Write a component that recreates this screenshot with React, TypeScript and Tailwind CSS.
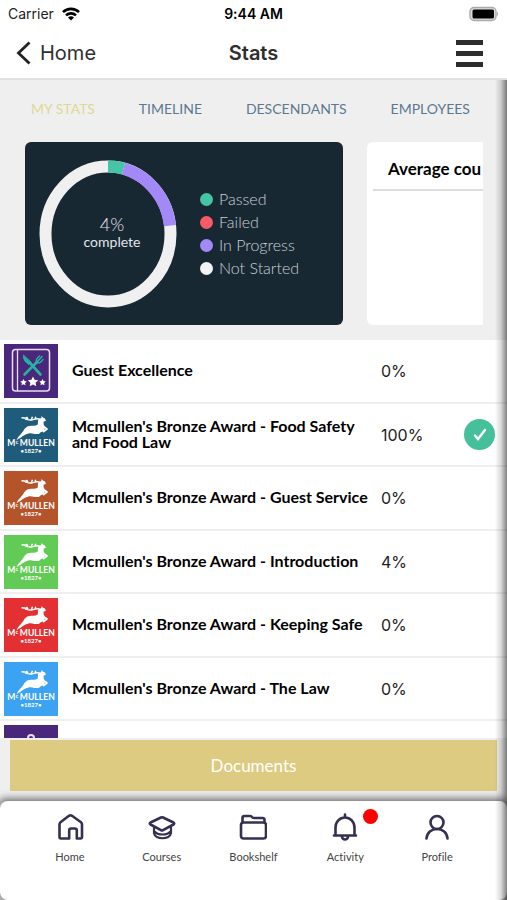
import type { ReactNode } from "react";

type Course = {
  title: string;
  percent: string;
  tile: string;
  kind: "guest" | "stag";
  done?: boolean;
};

const tabs = ["MY STATS", "TIMELINE", "DESCENDANTS", "EMPLOYEES"];

const legend = [
  { label: "Passed", color: "bg-[#45c4a6]" },
  { label: "Failed", color: "bg-[#f85a67]" },
  { label: "In Progress", color: "bg-[#a388f8]" },
  { label: "Not Started", color: "bg-[#f2f4f6]" },
];

const courses: Course[] = [
  { title: "Guest Excellence", percent: "0%", tile: "bg-[#49277a]", kind: "guest" },
  {
    title: "Mcmullen's Bronze Award - Food Safety and Food Law",
    percent: "100%",
    tile: "bg-[#1f5c7c]",
    kind: "stag",
    done: true,
  },
  { title: "Mcmullen's Bronze Award - Guest Service", percent: "0%", tile: "bg-[#b5532a]", kind: "stag" },
  { title: "Mcmullen's Bronze Award - Introduction", percent: "4%", tile: "bg-[#62cb55]", kind: "stag" },
  { title: "Mcmullen's Bronze Award - Keeping Safe", percent: "0%", tile: "bg-[#e33032]", kind: "stag" },
  { title: "Mcmullen's Bronze Award - The Law", percent: "0%", tile: "bg-[#3ca2f2]", kind: "stag" },
];

function StatusBar() {
  return (
    <div className="grid h-7 grid-cols-3 items-center px-2 font-['Inter',sans-serif] text-sm text-black">
      <div className="flex items-center gap-2 text-[#222]">
        <span>Carrier</span>
        <svg width="18" height="14" viewBox="0 0 18 14" fill="none" stroke="#000" strokeWidth="2.6">
          <path d="M1 5.2a11.3 11.3 0 0 1 16 0" />
          <path d="M4 8.4a7.1 7.1 0 0 1 10 0" />
          <path d="M9 13.5 6 10.6a4.3 4.3 0 0 1 6 0Z" fill="#000" stroke="none" />
        </svg>
      </div>
      <div className="text-center font-semibold">9:44 AM</div>
      <svg className="justify-self-end" width="30" height="16" viewBox="0 0 30 16">
        <rect x="1" y="1.5" width="26" height="13" rx="4" fill="#ddd" stroke="#aaa" strokeWidth="1.4" />
        <rect x="3.5" y="3.5" width="21.5" height="9" rx="1.5" />
        <path d="M28 5.5q2.2 2.5 0 5Z" fill="#aaa" />
      </svg>
    </div>
  );
}

function Header() {
  return (
    <header className="grid h-[52px] grid-cols-3 items-center border-b-2 border-[#e0e0e0] px-4 font-['Inter',sans-serif] text-xl text-[#2e2e2e]">
      <a href="#home" className="flex items-center gap-2">
        <svg width="16" height="24" viewBox="0 0 16 24" fill="none" stroke="#222" strokeWidth="2.8">
          <path d="M13.5 1.5 2.5 12l11 10.5" />
        </svg>
        Home
      </a>
      <h1 className="text-center font-semibold">Stats</h1>
      <button type="button" aria-label="Menu" className="mr-2 flex w-[27px] flex-col gap-[6px] justify-self-end">
        <span className="h-[5px] bg-[#2d2d2d]" />
        <span className="h-[5px] bg-[#2d2d2d]" />
        <span className="h-[5px] bg-[#2d2d2d]" />
      </button>
    </header>
  );
}

function Ring() {
  return (
    <div className="relative">
      <svg width="138" height="148" viewBox="0 0 138 148" fill="none" strokeWidth="12">
        <ellipse cx="69" cy="74" rx="62.5" ry="67.5" stroke="#f0f0f0" />
        <path d="M69 6.5A62.5 67.5 0 0 1 84.5 8.6" stroke="#45c4a6" />
        <path d="M84.5 8.6A62.5 67.5 0 0 1 131 65.6" stroke="#a388f8" />
      </svg>
      <div className="absolute inset-0 flex flex-col items-center justify-center pb-1 pl-2 text-[#e2e6ea]">
        <span className="text-lg leading-5 font-light">4%</span>
        <span className="text-sm leading-4">complete</span>
      </div>
    </div>
  );
}

function Cards() {
  return (
    <div className="mr-6 ml-[25px] flex gap-6 overflow-hidden">
      <section className="flex h-[183px] w-[318px] shrink-0 items-center gap-[23px] rounded-md bg-[#182833] pl-[14px]">
        <Ring />
        <ul className="text-[#c9d0d6]">
          {legend.map((item) => (
            <li key={item.label} className="flex h-[23px] items-center gap-[6px] text-base font-light">
              <span className={`size-[13px] rounded-full ${item.color}`} />
              {item.label}
            </li>
          ))}
        </ul>
      </section>
      <section className="w-[318px] shrink-0 rounded-md bg-white pl-[6px]">
        <h2 className="border-b-2 border-[#ddd] px-[15px] pt-[15px] pb-2 text-[17px] leading-6 font-bold whitespace-nowrap text-black">
          Average cou
        </h2>
      </section>
    </div>
  );
}

function GuestLogo() {
  return (
    <svg viewBox="0 0 54 54" fill="none">
      <rect x="8.5" y="5.5" width="37" height="41.5" rx="3" stroke="#eadcf5" strokeWidth="1.5" />
      <path d="M13.5 5.5v41.5" stroke="#eadcf5" strokeWidth="1.3" />
      <g stroke="#27b3a2" strokeLinecap="round">
        <path d="M26 19 36.500 30.500" strokeWidth="2.600" />
        <path d="M19.500 11.500c-.5 4 2.500 7.500 5.500 9l2-2Z" fill="#27b3a2" strokeWidth="1" />
        <path d="M20.500 30.500 33 18" strokeWidth="2.600" />
        <path d="M32.500 18c-1-2.500.5-4 3-6M34 17l4-4.500M33 18.500c3 1 4-.5 6-3" strokeWidth="1.500" />
      </g>
      <g fill="#fff">
        <path d="m29 32.500 1.600 3.200 3.600.5-2.600 2.500.7 3.500-3.300-1.700-3.300 1.700.7-3.500-2.600-2.500 3.600-.5Z" />
        <path d="m19.500 35 1 2.100 2.300.3-1.700 1.600.4 2.300-2-1.100-2 1.100.4-2.300-1.700-1.600 2.300-.3Z" />
        <path d="m38.500 35 1 2.100 2.300.3-1.700 1.600.4 2.300-2-1.100-2 1.100.4-2.300-1.700-1.600 2.300-.3Z" />
      </g>
    </svg>
  );
}

function StagLogo() {
  return (
    <svg viewBox="0 0 54 54" fill="#fff">
      {/* body and outstretched hind legs */}
      <path d="M12.500 32.500C14 28 17.500 26 19.300 23c1.500-2.800 3-4.500 6-5 3-.4 6 .3 8.200-1.200.8-1.500.2-3 .5-4.800l3.300-2 .2-2 1.700 1.700 1.500.6 1.300 2.400-2.500 1 .2 2.800c1.300 2 1.600 4.300.4 6.200-2 1-3.800 1.500-5.100 3.200l-4.500 0c-2.500-.6-4-.8-6-.5-3.500.6-5.500 2.400-7.500 4.100-1.800 1-3 1.500-4.500 3Z" />
      <g fill="none" stroke="#fff" strokeLinejoin="round">
        <path d="M39.500 18.500 43 21l-4 3" strokeWidth="1.700" />
        {/* antlers swept back */}
        <path d="M36.500 11.500c-3-1.400-5-.5-8 .2-3 .6-5.500 0-7.500-.8M17.500 9.800l5.500.5M24 11l-1.500-2.200M27.500 11.300l1-2.600M31 10.800l.8-2" strokeWidth="1.500" />
      </g>
      <g fontFamily="Lato" fontWeight="700">
        <text x="3.300" y="38.300" fontSize="8.600">M</text>
        <text x="11.500" y="35.500" fontSize="6">c</text>
        <text x="15.800" y="38.300" fontSize="8.600">MULLEN</text>
        <text x="27" y="44.800" fontSize="6" textAnchor="middle">•1827•</text>
      </g>
    </svg>
  );
}

function CourseRow({ course }: { course: Course }) {
  return (
    <li className="flex h-16 items-center border-b-2 border-[#efefef] pl-1 even:h-[63px]">
      <div className={`size-[54px] shrink-0 ${course.tile}`}>
        {course.kind === "guest" ? <GuestLogo /> : <StagLogo />}
      </div>
      <h3 className="ml-[14px] w-[301px] pb-[2px] text-base leading-4 font-bold text-black">{course.title}</h3>
      <span className="ml-2 font-['Inter',sans-serif] text-base text-[#222]">{course.percent}</span>
      {course.done ? (
        <span className="mr-3 ml-auto flex size-[31px] items-center justify-center rounded-full bg-[#45c09a]">
          <svg width="14" height="13" viewBox="0 0 14 13" fill="none" stroke="#fff" strokeWidth="2.4" strokeLinecap="round">
            <path d="m2 7.500 3 3.500 7-9" />
          </svg>
        </span>
      ) : null}
    </li>
  );
}

function NavItem({ label, badge, children }: { label: string; badge?: boolean; children: ReactNode }) {
  return (
    <a href={`#${label.toLowerCase()}`} className="relative flex flex-1 flex-col items-center gap-2">
      <svg
        width="28"
        height="28"
        viewBox="0 0 28 28"
        fill="none"
        stroke="#35304f"
        strokeWidth="2.6"
        strokeLinecap="round"
        strokeLinejoin="round"
      >
        {children}
      </svg>
      <span className="text-[11px] leading-4 text-[#444]">{label}</span>
      {badge ? <span className="absolute -top-1 left-1/2 ml-[18px] size-[15px] rounded-full bg-[#ff0000]" /> : null}
    </a>
  );
}

function BottomNav() {
  return (
    <footer className="relative bg-[#aaa] shadow-[0_-2px_8px_rgba(0,0,0,0.6)]">
      <nav className="flex h-[99px] rounded-lg bg-white px-6 pt-3">
        <NavItem label="Home">
          <path d="M3.500 11.500q0-1.500 1-2.300L13 2.800q1.500-1 3 0L25 9.200q1 .8 1 2.300V24q0 1.500-1.500 1.500h-3.700V17.500q0-2-2-2h-3.600q-2 0-2 2v8H5Q3.500 25.500 3.500 24Z" />
        </NavItem>
        <NavItem label="Courses">
          <path d="M13 4.500q1-.5 2 0L25.500 9.500q1.500 1 0 2L15 17.200q-1 .6-2 0L2.500 11.500q-1.500-1 0-2Z" />
          <path d="M6 14.500V20c1 7 16 7 17 0v-5.500M6.500 18.500c3 4 13 4 16 0" strokeWidth="2.200" />
        </NavItem>
        <NavItem label="Bookshelf">
          <rect x="2" y="9.500" width="25" height="16" rx="2.500" />
          <path d="M3.500 9.500V5q0-2 2-2h5.500q1.500 0 2 1t2 1h8.500q2 0 2 2v2.500" />
        </NavItem>
        <NavItem label="Activity" badge>
          <path d="M14 1.500v3M4.500 22v-7.500a9.500 10 0 0 1 19 0V22M3 22.500h22M11 23.500a3 3 0 0 0 6 0" />
        </NavItem>
        <NavItem label="Profile">
          <circle cx="14" cy="9.500" r="6.500" />
          <path d="M3.500 25.500c.5-6 5-9.500 10.500-9.500s10 3.500 10.500 9.500" />
        </NavItem>
      </nav>
    </footer>
  );
}

export default function App() {
  return (
    <div className="flex h-screen flex-col overflow-hidden bg-white font-['Lato',sans-serif] [font-variant-ligatures:none]">
      <StatusBar />
      <Header />
      <div className="relative flex min-h-0 flex-1 flex-col">
        <main className="flex min-h-0 flex-1 flex-col overflow-hidden bg-[#efefef]">
          <nav className="flex h-[62px] shrink-0 items-center justify-between pr-[37px] pb-1 pl-[31px] text-sm">
            {tabs.map((tab, i) => (
              <a key={tab} href="#tab" className={i === 0 ? "text-[#dfd896]" : "text-[#5c7890]"}>
                {tab}
              </a>
            ))}
          </nav>
          <Cards />
          <ul className="mt-[15px] min-h-0 flex-1 overflow-hidden bg-white">
            {courses.map((course) => (
              <CourseRow key={course.title} course={course} />
            ))}
            <li className="pt-1 pl-1">
              <div className="size-[54px] bg-[#49277a]">
                <svg viewBox="0 0 54 54" fill="none" stroke="#eadcf5" strokeWidth="2">
                  <circle cx="27" cy="13" r="3" />
                </svg>
              </div>
            </li>
          </ul>
          <div className="px-[10px] pt-[2px] pb-[10px]">
            <button type="button" className="h-[51px] w-full bg-[#dccb80] text-[17px] text-white">
              Documents
            </button>
          </div>
        </main>
        <BottomNav />
        <div className="pointer-events-none absolute inset-y-0 right-0 w-3 bg-linear-to-l from-black/50 via-black/15 to-transparent" />
      </div>
    </div>
  );
}
